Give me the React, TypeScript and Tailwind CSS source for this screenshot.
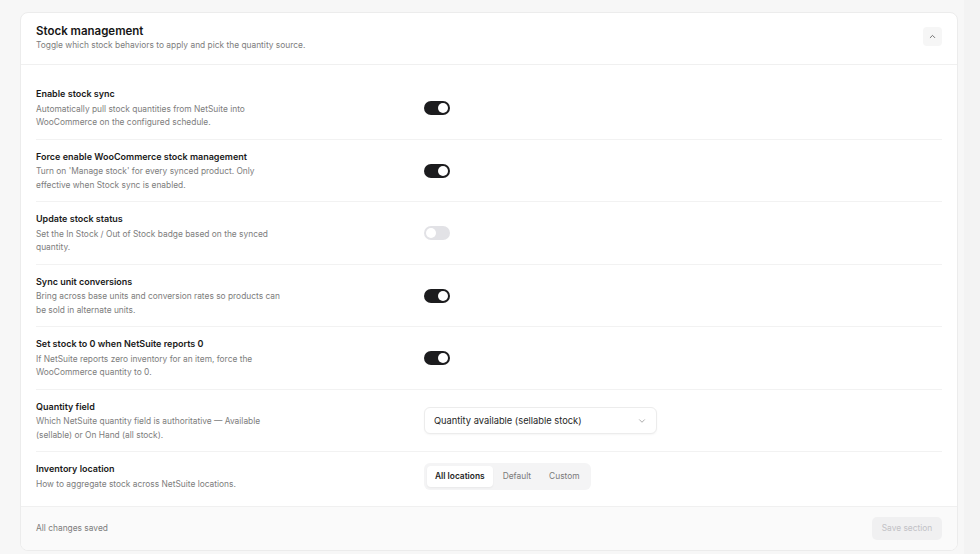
import { ChevronDown, ChevronUp } from "lucide-react";

type Row = {
  label: string;
  desc: string;
  control: "on" | "off" | "select" | "segment";
};

const rows: Row[] = [
  {
    label: "Enable stock sync",
    desc: "Automatically pull stock quantities from NetSuite into WooCommerce on the configured schedule.",
    control: "on",
  },
  {
    label: "Force enable WooCommerce stock management",
    desc: "Turn on 'Manage stock' for every synced product. Only effective when Stock sync is enabled.",
    control: "on",
  },
  {
    label: "Update stock status",
    desc: "Set the In Stock / Out of Stock badge based on the synced quantity.",
    control: "off",
  },
  {
    label: "Sync unit conversions",
    desc: "Bring across base units and conversion rates so products can be sold in alternate units.",
    control: "on",
  },
  {
    label: "Set stock to 0 when NetSuite reports 0",
    desc: "If NetSuite reports zero inventory for an item, force the WooCommerce quantity to 0.",
    control: "on",
  },
  {
    label: "Quantity field",
    desc: "Which NetSuite quantity field is authoritative — Available (sellable) or On Hand (all stock).",
    control: "select",
  },
  {
    label: "Inventory location",
    desc: "How to aggregate stock across NetSuite locations.",
    control: "segment",
  },
];

function Toggle({ on }: { on: boolean }) {
  if (!on) {
    return (
      <div className="flex h-[14px] w-[26px] items-center rounded-full bg-[#e2e2e6] px-[2px]">
        <div className="h-[10px] w-[10px] rounded-full bg-white" />
      </div>
    );
  }
  return (
    <div className="flex h-[14px] w-[26px] items-center justify-end rounded-full bg-[#1c1c1e] px-[2px]">
      <div className="h-[10px] w-[10px] rounded-full bg-white" />
    </div>
  );
}

function Control({ kind }: { kind: Row["control"] }) {
  if (kind === "on") return <Toggle on />;
  if (kind === "off") return <Toggle on={false} />;
  if (kind === "select") {
    return (
      <div className="flex h-[27px] w-[233px] items-center justify-between rounded-[6px] border border-[#ececec] bg-white pl-[9px] pr-[9px] shadow-[0_1px_2px_rgba(0,0,0,0.04)]">
        <span className="text-[9.3px] text-[#262626]">Quantity available (sellable stock)</span>
        <ChevronDown className="h-[10px] w-[10px] text-[#9a9a9a]" strokeWidth={2} />
      </div>
    );
  }
  return (
    <div className="flex h-[27px] items-center gap-[2px] rounded-[6px] bg-[#f4f4f5] p-[3px]">
      <div className="flex h-full items-center rounded-[4px] bg-white px-[8px] text-[8.4px] font-semibold text-[#1f1f1f] shadow-[0_1px_2px_rgba(0,0,0,0.05)]">
        All locations
      </div>
      <div className="flex h-full items-center px-[8px] text-[8.4px] text-[#7a7a7a]">Default</div>
      <div className="flex h-full items-center px-[8px] text-[8.4px] text-[#7a7a7a]">Custom</div>
    </div>
  );
}

export default function App() {
  return (
    <div
      className="flex h-[554px] w-[980px] overflow-hidden bg-[#f7f7f7]"
      style={{ fontFamily: "Inter, 'Noto Sans', sans-serif" }}
    >
      <div className="flex-1 pl-[20px] pr-[6px] pt-[12px]">
        <div className="overflow-hidden rounded-[8px] border border-[#ececec] bg-white">
          <div className="flex items-start justify-between border-b border-[#f0f0f0] px-[15px] pb-[13px] pt-[11px]">
            <div>
              <h2 className="text-[11.5px] font-semibold leading-[15px] text-[#161616]">Stock management</h2>
              <p className="text-[8.4px] leading-[12px] text-[#7d7d7d]">
                Toggle which stock behaviors to apply and pick the quantity source.
              </p>
            </div>
            <button className="mt-[3px] flex h-[19px] w-[19px] items-center justify-center rounded-[4px] bg-[#f6f6f6]">
              <ChevronUp className="h-[9px] w-[9px] text-[#6b6b6b]" strokeWidth={2.5} />
            </button>
          </div>

          <div className="px-[15px] pb-[6px] pt-[12px]">
            {rows.map((r, i) => (
              <div
                key={r.label}
                className={
                  "grid grid-cols-[388px_1fr] items-center pb-[9px] pt-[10px] " +
                  (i < rows.length - 1 ? "border-b border-[#f2f2f2]" : "")
                }
              >
                <div>
                  <div className="text-[9px] font-semibold leading-[13.5px] text-[#1a1a1a]">{r.label}</div>
                  <p className="mt-[2px] max-w-[252px] text-[8.4px] leading-[13.5px] text-[#7d7d7d]">{r.desc}</p>
                </div>
                <div className="flex">
                  <Control kind={r.control} />
                </div>
              </div>
            ))}
          </div>

          <div className="flex items-center justify-between border-t border-[#f0f0f0] bg-[#fafafa] px-[15px] py-[10px]">
            <span className="text-[8.4px] text-[#7d7d7d]">All changes saved</span>
            <button className="h-[23px] w-[70px] rounded-[5px] bg-[#f0f0f1] text-[8.4px] text-[#c2c2c6]">
              Save section
            </button>
          </div>
        </div>
      </div>
      <div className="w-[16px] bg-[#f3f3f3]" />
    </div>
  );
}
